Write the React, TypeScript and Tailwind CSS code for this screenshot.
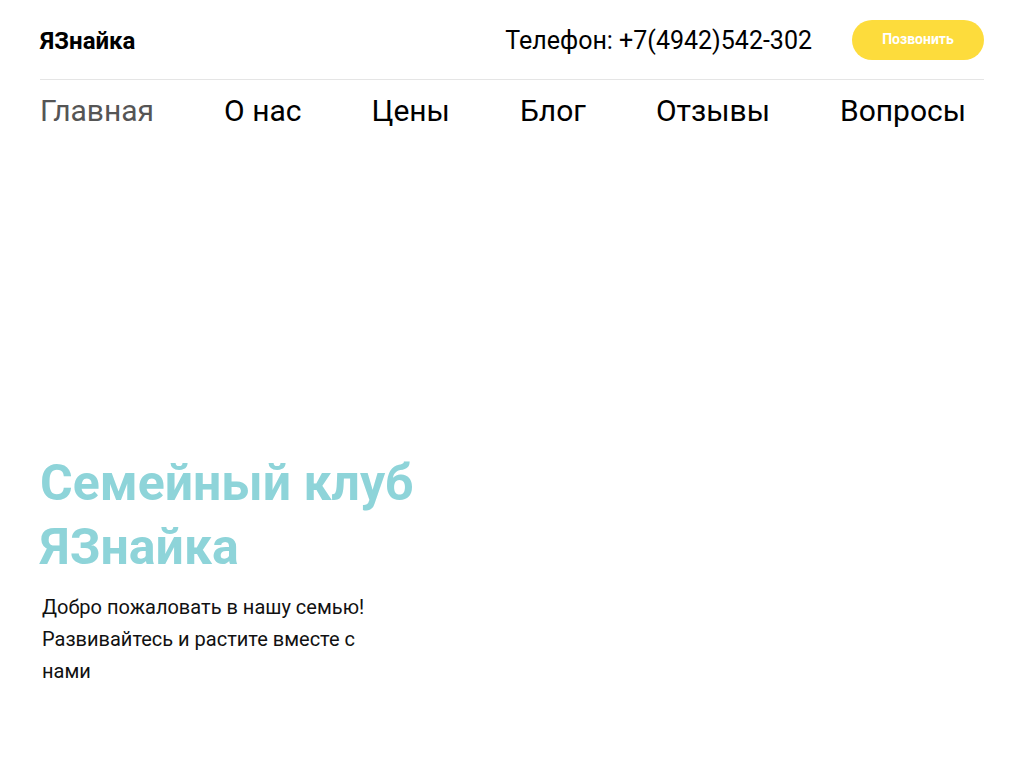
import React from 'react';

const NAV = ['Главная', 'О нас', 'Цены', 'Блог', 'Отзывы', 'Вопросы'];

export default function App() {
  return (
    <div className="min-h-screen bg-white font-['Roboto',sans-serif] text-black">
      <div className="mx-[40px]">
        <header className="flex items-center justify-between h-[80px] border-b border-[#e5e5e5]">
          <div className="text-[24px] font-bold leading-none pt-[2px]">ЯЗнайка</div>
          <div className="flex items-center gap-[40px]">
            <span className="text-[25px] leading-none pt-[2px]">Телефон: +7(4942)542-302</span>
            <button className="w-[132px] h-[40px] rounded-full bg-[#fddc3c] text-white text-[14px] font-bold">
              Позвонить
            </button>
          </div>
        </header>
        <nav className="flex gap-[70px] pt-[13px]">
          {NAV.map((item, i) => (
            <a
              key={item}
              href="#"
              className={`text-[30px] leading-[36px] ${i === 0 ? 'text-[#555555]' : 'text-black'}`}
            >
              {item}
            </a>
          ))}
        </nav>
        <section className="pt-[322px]">
          <h1 className="text-[50px] leading-[64px] font-bold text-[#8ed4d9] w-[420px]">
            Семейный клуб ЯЗнайка
          </h1>
          <p className="mt-[12px] ml-[2px] w-[340px] text-[20px] leading-[32px] text-[#111]">
            Добро пожаловать в нашу семью! Развивайтесь и растите вместе с нами
          </p>
        </section>
      </div>
    </div>
  );
}
